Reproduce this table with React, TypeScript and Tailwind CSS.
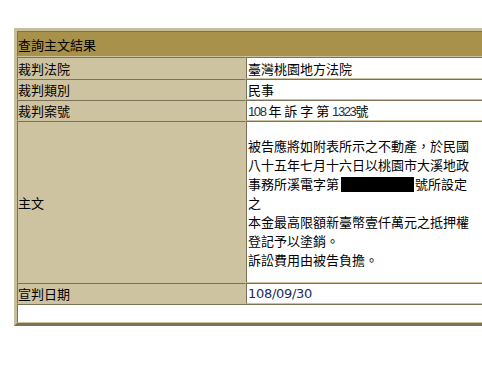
import React from 'react';

// inset cell edges: dark top/left, light bottom/right
const cell =
  'p-0 border border-t-[#7d7258] border-l-[#7d7258] border-b-[#cdc2a0] border-r-[#cdc2a0] align-middle';
const label = 'bg-[#cec3a1] w-[229px]';
const value = 'bg-white pl-px';

type RowProps = {
  title: string;
  h: string;
  children: React.ReactNode;
};

const Row: React.FC<RowProps> = ({ title, h, children }) => (
  <tr>
    <td className={`${cell} ${label}`}>
      <div className={`${h} flex items-center`}>{title}</div>
    </td>
    <td className={`${cell} ${value}`}>
      <div className={`${h} flex items-center`}>{children}</div>
    </td>
  </tr>
);

const Num: React.FC<{ children: React.ReactNode }> = ({ children }) => (
  <span className="font-['Liberation_Sans'] text-[13px] tracking-[-1.4px] text-[#1c2c5c]">{children}</span>
);

const App: React.FC = () => {
  return (
    <div className="w-full h-[366px] overflow-hidden bg-white font-['Noto_Sans_CJK_TC',sans-serif] text-[13px] leading-[19px] text-black">
      <div className="pt-[28px] pl-[14px]">
        <table className="w-[520px] border-separate border-spacing-0 border-[3px] border-t-[#c8bd99] border-l-[#c8bd99] border-r-[#7d7258] border-b-[#7d7258]">
          <tbody>
            <tr>
              <td colSpan={2} className={`${cell} bg-[#a8914b]`}>
                <div className="h-[24px] flex items-center">查詢主文結果</div>
              </td>
            </tr>
            <Row title="裁判法院" h="h-[20px]">臺灣桃園地方法院</Row>
            <Row title="裁判類別" h="h-[19px]">民事</Row>
            <Row title="裁判案號" h="h-[19px]">
              <span>
                <Num>108</Num>&nbsp;年 訴 字 第&nbsp;<Num>1323</Num>號
              </span>
            </Row>
            <Row title="主文" h="h-[160px]">
              <div className="whitespace-nowrap">
                被告應將如附表所示之不動產，於民國
                <br />
                八十五年七月十六日以桃園市大溪地政
                <br />
                事務所溪電字第
                <span className="inline-block w-[73px] h-[15px] bg-black ml-[2px] mr-[1px] align-[-3px]" />
                號所設定
                <br />
                之
                <br />
                本金最高限額新臺幣壹仟萬元之抵押權
                <br />
                登記予以塗銷。
                <br />
                訴訟費用由被告負擔。
              </div>
            </Row>
            <Row title="宣判日期" h="h-[19px]">
              <span className="font-['DejaVu_Sans'] text-[13px] tracking-[-0.3px] text-[#1c2c5c]">108/09/30</span>
            </Row>
            <tr>
              <td colSpan={2} className={`${cell} bg-white`}>
                <div className="h-[17px]" />
              </td>
            </tr>
          </tbody>
        </table>
      </div>
    </div>
  );
};

export default App;
